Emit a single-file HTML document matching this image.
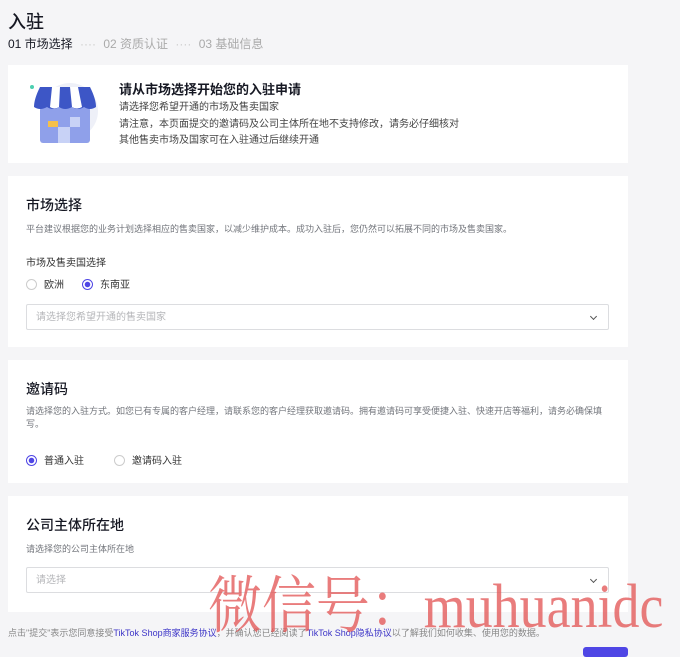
<!DOCTYPE html>
<html><head><meta charset="utf-8"><style>
body{margin:0;width:680px;height:651px;background:#f5f5f7;font-family:"Liberation Sans","Noto Sans CJK SC",sans-serif;position:relative;overflow:hidden;color:#161823}
.a{position:absolute}
.card{position:absolute;left:8px;width:620px;background:#fff}
.h{font-size:14px;font-weight:500;color:#161823}
.s{font-size:9px;color:#73767c}
.rad{display:inline-block;width:11px;height:11px;border:1px solid #ccc;border-radius:50%;vertical-align:-2px;margin-right:7px;box-sizing:border-box}
.rad.on{border:1px solid #4f46e5;background:radial-gradient(#4f46e5 2.5px,#fff 3px)}
.sel{position:absolute;left:18px;width:583px;height:26px;border:1px solid #dcdde0;border-radius:2px;font-size:10px;color:#b5b6b9;line-height:26px;padding-left:9px;box-sizing:border-box}
.sel:after{content:"";position:absolute;right:12px;top:9px;width:4px;height:4px;border-right:1px solid #555;border-bottom:1px solid #555;transform:rotate(45deg)}
</style></head><body>
<div class="a" style="left:8px;top:8px;font-size:18px;font-weight:500">入驻</div>
<div class="a" style="left:8px;top:35px;font-size:12px;color:#161823">01 市场选择 <span style="color:#ccc;margin:0 4px">····</span> <span style="color:#aaa">02 资质认证</span> <span style="color:#ccc;margin:0 4px">····</span> <span style="color:#aaa">03 基础信息</span></div>

<div class="card" style="top:65px;height:98px">
 <svg class="a" style="left:12px;top:14px" width="80" height="70" viewBox="0 0 80 70">
  <circle cx="50" cy="32" r="28" fill="#eef0f8"/>
  <rect x="20" y="28" width="50" height="36" rx="3" fill="#8fa0ea"/>
  <path d="M14 28 Q14 20 20 8 H70 Q76 20 76 28 Q70 32 64 28 Q58 32 52 28 Q45 32 39 28 Q33 32 27 28 Q20 32 14 28Z" fill="#3d56c6"/>
  <path d="M32 8 L30 28 Q34 31 39 28 L40 8 Z M50 8 L52 28 Q57 31 62 28 L58 8Z" fill="#fff"/>
  <rect x="28" y="42" width="10" height="6" fill="#f5c04a"/>
  <rect x="50" y="38" width="10" height="10" fill="#c8d2f6"/>
  <rect x="38" y="48" width="12" height="16" fill="#c8d2f6"/>
  <circle cx="12" cy="8" r="2" fill="#4ccfb0"/>
 </svg>
 <div class="a" style="left:111px;top:14px;font-size:13px;font-weight:600">请从市场选择开始您的入驻申请</div>
 <div class="a" style="left:111px;top:35px;font-size:10px;color:#444;line-height:16.5px">请选择您希望开通的市场及售卖国家<br>请注意，本页面提交的邀请码及公司主体所在地不支持修改，请务必仔细核对<br>其他售卖市场及国家可在入驻通过后继续开通</div>
</div>

<div class="card" style="top:176px;height:171px">
 <div class="a h" style="left:18px;top:19px">市场选择</div>
 <div class="a s" style="left:18px;top:46px">平台建议根据您的业务计划选择相应的售卖国家，以减少维护成本。成功入驻后，您仍然可以拓展不同的市场及售卖国家。</div>
 <div class="a" style="left:18px;top:78px;font-size:10px;color:#333">市场及售卖国选择</div>
 <div class="a" style="left:18px;top:100px;font-size:10px;color:#333"><span class="rad"></span>欧洲<span style="display:inline-block;width:18px"></span><span class="rad on"></span>东南亚</div>
 <div class="sel" style="top:128px">请选择您希望开通的售卖国家</div>
</div>

<div class="card" style="top:360px;height:123px">
 <div class="a h" style="left:18px;top:19px">邀请码</div>
 <div class="a s" style="left:18px;top:45px;width:580px;line-height:13px">请选择您的入驻方式。如您已有专属的客户经理，请联系您的客户经理获取邀请码。拥有邀请码可享受便捷入驻、快速开店等福利，请务必确保填写。</div>
 <div class="a" style="left:18px;top:92px;font-size:10px;color:#333"><span class="rad on"></span>普通入驻<span style="display:inline-block;width:30px"></span><span class="rad"></span>邀请码入驻</div>
</div>

<div class="card" style="top:496px;height:116px">
 <div class="a h" style="left:18px;top:19px">公司主体所在地</div>
 <div class="a s" style="left:18px;top:46px">请选择您的公司主体所在地</div>
 <div class="sel" style="top:71px">请选择</div>
</div>

<div class="a" style="left:8px;top:626px;font-size:9px;color:#888;white-space:nowrap">点击"提交"表示您同意接受<span style="color:#3c34c7">TikTok Shop商家服务协议</span>，并确认您已经阅读了<span style="color:#3c34c7">TikTok Shop隐私协议</span>以了解我们如何收集、使用您的数据。</div>
<div class="a" style="left:583px;top:647px;width:45px;height:10px;background:#4f46e5;border-radius:3px"></div>
<div class="a" style="left:208px;top:572px;font-family:'Liberation Serif','Noto Serif CJK SC',serif;font-size:62px;color:rgba(225,80,80,.75);white-space:nowrap;line-height:70px;transform:scaleX(0.87);transform-origin:left top">微信号：muhuanidc</div>
</body></html>
